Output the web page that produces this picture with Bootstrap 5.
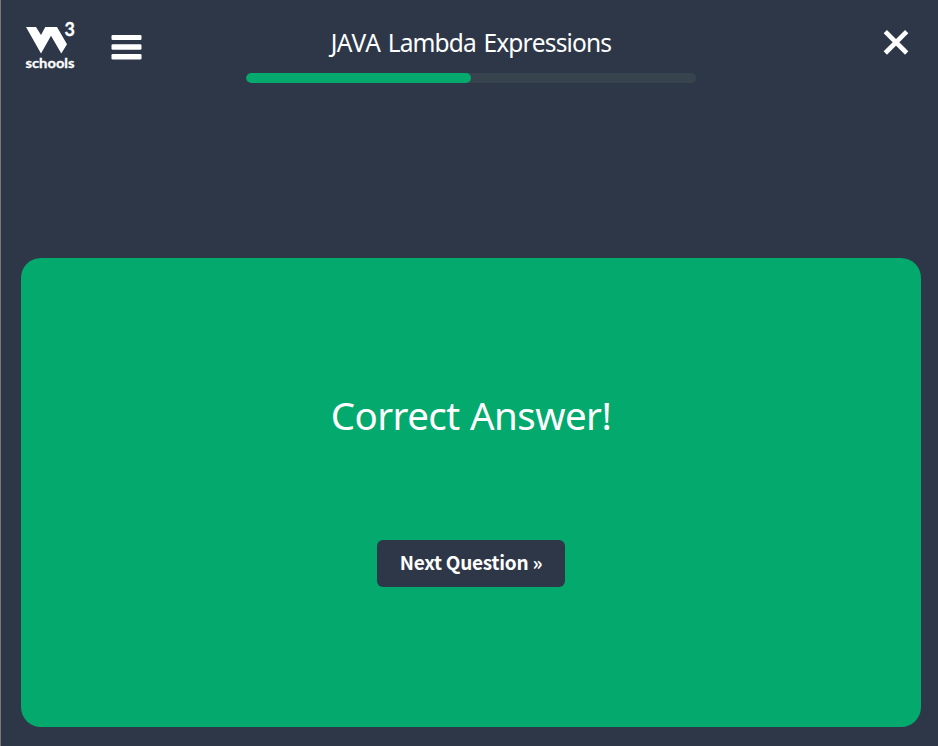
<!DOCTYPE html>
<html lang="en">
<head>
<meta charset="utf-8">
<meta name="viewport" content="width=device-width, initial-scale=1">
<title>JAVA Lambda Expressions</title>
<link href="https://cdn.jsdelivr.net/npm/bootstrap@5.3.0/dist/css/bootstrap.min.css" rel="stylesheet">
<style>
  body { background: #2d3748; font-family: "Noto Sans", "Open Sans", sans-serif; }
  .quiz { height: 746px; border-left: 1px solid #797979; padding: 0 17px 19px 20px; }
  .topbar { height: 258px; }
  .side { width: 225px; }
  .brand { width: 58px; height: 56px; margin-top: 18px; }
  .menu-btn { margin: 34px 0 0 32px; }
  .center-col { width: 450px; padding-top: 25px; }
  .quiz-title { font-size: 24.5px; line-height: 36px; letter-spacing: -.85px; word-spacing: 2px; font-kerning: none; }
  .progress { height: 10px; margin-top: 12px; background: #38444d; border-radius: 5px; }
  .progress-bar { background: #04aa6d; border-radius: 5px; }
  .close-btn { margin: 28px 11px 0 0; }
  .result { background: #04aa6d; border-radius: 20px; height: 469px; padding-top: 127px; }
  .result-text { font-size: 38.5px; line-height: 60px; letter-spacing: -.55px; word-spacing: 1px; }
  .next-btn { width: 188px; height: 47px; margin-top: 95px; padding: 0 0 3px; background: #2d3748; border-radius: 6px;
    font: 700 19px/26px "Noto Sans CJK SC", "Noto Sans", sans-serif; letter-spacing: -.25px; }
</style>
<script src="https://cdn.jsdelivr.net/npm/bootstrap@5.3.0/dist/js/bootstrap.bundle.min.js"></script>
</head>
<body class="text-white overflow-hidden">
<div class="quiz">
  <header class="topbar d-flex align-items-start">
    <div class="side d-flex align-items-start">
      <a href="#" class="brand d-block" aria-label="Home">
        <svg class="d-block" width="58" height="56" viewBox="21 18 58 56" fill="#fff">
          <path d="M26 27H36L41 35L45.3 27H57L67 44.3L61.3 53.5L51 35.7L41 53.5Z"/>
          <text x="64.4" y="36" font-family="Lato" font-weight="700" font-size="18" textLength="10.4" lengthAdjust="spacingAndGlyphs" stroke="#fff" stroke-width=".3">3</text>
          <text x="25.5" y="67.8" font-family="Lato" font-weight="700" font-size="14" textLength="49" lengthAdjust="spacingAndGlyphs" stroke="#fff" stroke-width=".3">schools</text>
        </svg>
      </a>
      <button class="menu-btn btn p-0 border-0" aria-label="Menu">
        <svg class="d-block" width="31" height="26" viewBox="0 0 31 26" fill="#fff">
          <rect x=".5" y="1" width="30" height="5" rx="1.3"/>
          <rect x=".5" y="10.2" width="30" height="5.5" rx="1.3"/>
          <rect x=".5" y="20" width="30" height="5.5" rx="1.3"/>
        </svg>
      </button>
    </div>
    <div class="center-col text-center">
      <h1 class="quiz-title fw-normal m-0 text-nowrap">JAVA Lambda Expressions</h1>
      <div class="progress"><div class="progress-bar w-50"></div></div>
    </div>
    <div class="side d-flex justify-content-end">
      <button class="close-btn btn p-0 border-0" aria-label="Close">
        <svg class="d-block" width="28" height="28" viewBox="0 0 28 28" stroke="#fff" stroke-width="4.6">
          <path d="M3.3 3.6L24.7 25M24.7 3.6L3.3 25"/>
        </svg>
      </button>
    </div>
  </header>
  <main class="result d-flex flex-column align-items-center">
    <h2 class="result-text fw-normal m-0">Correct Answer!</h2>
    <button class="next-btn btn text-white border-0">Next Question »</button>
  </main>
</div>
</body>
</html>
